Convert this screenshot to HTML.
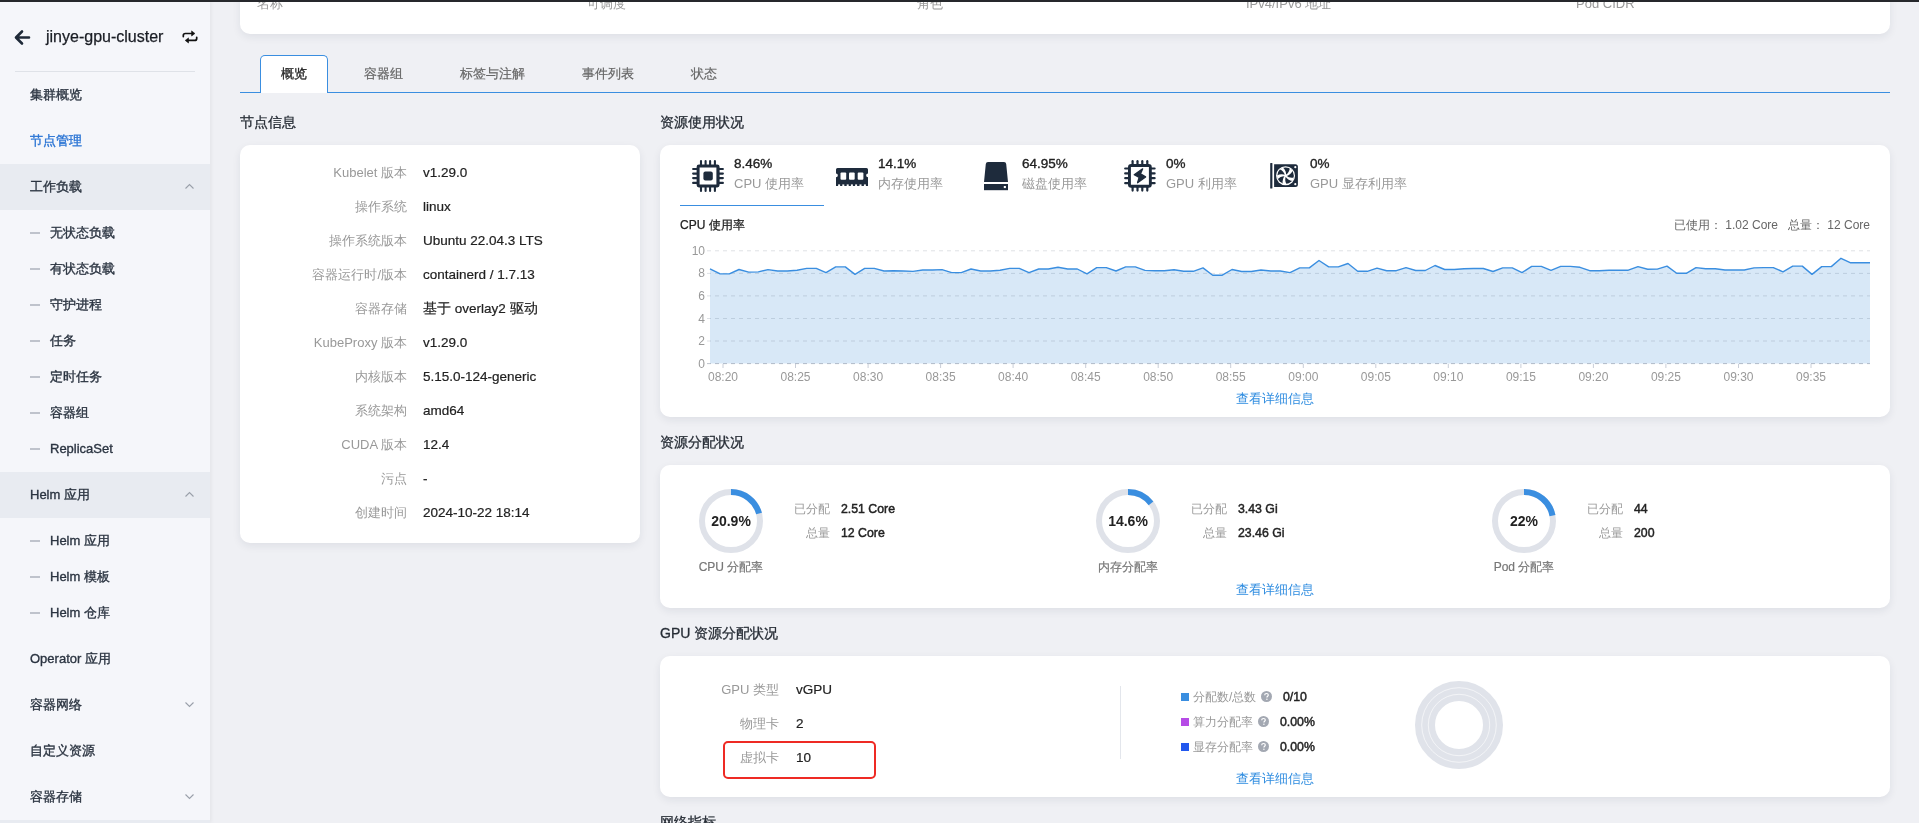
<!DOCTYPE html>
<html><head><meta charset="utf-8">
<style>
*{box-sizing:border-box;margin:0;padding:0}
html,body{width:1919px;height:823px;overflow:hidden}
body{position:relative;background:#eff0f4;font-family:"Liberation Sans",sans-serif;color:#222;font-size:13px}
.a{position:absolute;white-space:nowrap;line-height:20px}
#topbar{position:absolute;left:0;top:0;width:1919px;height:2px;background:#26282c;z-index:50}
#side{position:absolute;left:0;top:0;width:210px;height:823px;background:#f5f6fa;box-shadow:1px 0 4px rgba(0,0,0,.06);z-index:5}
#side .it{position:absolute;left:30px;font-size:13px;color:#2b3441;line-height:20px;margin-top:1px;-webkit-text-stroke:0.35px #2b3441}
#side .grp{position:absolute;left:0;width:210px;height:46px;background:#e8ebf1}
#side .sub{position:absolute;left:50px;font-size:13px;color:#2b3441;line-height:20px;margin-top:1px;-webkit-text-stroke:0.35px #2b3441}
#side .dash{position:absolute;left:30px;width:10px;height:2px;margin-top:0px;background:#bfc3cc}
.chev{position:absolute;width:9px;height:9px}
.card{position:absolute;background:#fff;border-radius:10px;box-shadow:0 3px 8px rgba(30,40,60,.08)}
.title{position:absolute;font-size:14px;color:#262c35;line-height:20px;white-space:nowrap;-webkit-text-stroke:0.3px #262c35}
.lbl{position:absolute;color:#999;font-size:13px;line-height:20px;white-space:nowrap;text-align:right}
.val{position:absolute;color:#222;font-size:13.5px;line-height:20px;white-space:nowrap;-webkit-text-stroke:0.2px #222}
</style></head>
<body>
<div id="root" style="position:absolute;left:0;top:0;width:1919px;height:823px;overflow:hidden;will-change:transform">
<div id="topbar"></div>

<!-- SIDEBAR -->
<div id="side">
  <svg style="position:absolute;left:13px;top:29px" width="18" height="17" viewBox="0 0 18 17"><path d="M16 8.5H3.5M9 2.5L3 8.5L9 14.5" fill="none" stroke="#1f2a38" stroke-width="2.6" stroke-linecap="round" stroke-linejoin="round"/></svg>
  <div class="a" style="left:46px;top:27px;font-size:16px;color:#1a1d24;-webkit-text-stroke:0.25px #1a1d24">jinye-gpu-cluster</div>
  <svg style="position:absolute;left:176px;top:24px" width="28" height="26" viewBox="0 0 28 26"><g fill="none" stroke="#111" stroke-width="1.7" stroke-linecap="round"><path d="M7.3 12.6V11.4Q7.3 9.5 9.4 9.5H16"/><path d="M20.7 13.3V14.4Q20.7 16.4 18.7 16.4H12.2"/></g><g fill="#111" stroke="#111" stroke-width="0.6" stroke-linejoin="round"><path d="M15.6 6.9L18.9 9.5L15.6 12Z"/><path d="M12.5 13.9L9.2 16.4L12.5 19Z"/></g></svg>
  <div style="position:absolute;left:15px;top:71px;width:180px;height:1px;background:#dfe2e8"></div>

  <div class="it" style="top:84px">集群概览</div>
  <div class="it" style="top:130px;color:#2a74d4;-webkit-text-stroke-color:#2a74d4">节点管理</div>

  <div class="grp" style="top:164px"></div>
  <div class="it" style="top:176px">工作负载</div>
  <svg class="chev" style="left:185px;top:182px" viewBox="0 0 9 9"><path d="M0.5 6.5L4.5 2.5L8.5 6.5" fill="none" stroke="#9aa0aa" stroke-width="1.1"/></svg>

  <div class="dash" style="top:231.5px"></div><div class="sub" style="top:222px">无状态负载</div>
  <div class="dash" style="top:267.5px"></div><div class="sub" style="top:258px">有状态负载</div>
  <div class="dash" style="top:303.5px"></div><div class="sub" style="top:294px">守护进程</div>
  <div class="dash" style="top:339.5px"></div><div class="sub" style="top:330px">任务</div>
  <div class="dash" style="top:375.5px"></div><div class="sub" style="top:366px">定时任务</div>
  <div class="dash" style="top:411.5px"></div><div class="sub" style="top:402px">容器组</div>
  <div class="dash" style="top:447.5px"></div><div class="sub" style="top:438px">ReplicaSet</div>

  <div class="grp" style="top:472px"></div>
  <div class="it" style="top:484px">Helm 应用</div>
  <svg class="chev" style="left:185px;top:490px" viewBox="0 0 9 9"><path d="M0.5 6.5L4.5 2.5L8.5 6.5" fill="none" stroke="#9aa0aa" stroke-width="1.1"/></svg>

  <div class="dash" style="top:539.5px"></div><div class="sub" style="top:530px">Helm 应用</div>
  <div class="dash" style="top:575.5px"></div><div class="sub" style="top:566px">Helm 模板</div>
  <div class="dash" style="top:611.5px"></div><div class="sub" style="top:602px">Helm 仓库</div>

  <div class="it" style="top:648px">Operator 应用</div>
  <div class="it" style="top:694px">容器网络</div>
  <svg class="chev" style="left:185px;top:700px" viewBox="0 0 9 9"><path d="M0.5 2.5L4.5 6.5L8.5 2.5" fill="none" stroke="#9aa0aa" stroke-width="1.1"/></svg>
  <div class="it" style="top:740px">自定义资源</div>
  <div class="it" style="top:786px">容器存储</div>
  <svg class="chev" style="left:185px;top:792px" viewBox="0 0 9 9"><path d="M0.5 2.5L4.5 6.5L8.5 2.5" fill="none" stroke="#9aa0aa" stroke-width="1.1"/></svg>
  <div class="grp" style="top:820px"></div>
</div>

<!-- MAIN -->
<!-- top card -->
<div class="card" style="left:240px;top:-20px;width:1650px;height:54px"></div>
<div class="lbl" style="left:257px;top:-6px;color:#999;text-align:left">名称</div>
<div class="lbl" style="left:587px;top:-6px;text-align:left">可调度</div>
<div class="lbl" style="left:917px;top:-6px;text-align:left">角色</div>
<div class="lbl" style="left:1246px;top:-6px;text-align:left">IPv4/IPv6 地址</div>
<div class="lbl" style="left:1576px;top:-6px;text-align:left">Pod CIDR</div>

<!-- tabs -->
<div style="position:absolute;left:240px;top:92px;width:1650px;height:1px;background:#3a8ee0"></div>
<div style="position:absolute;left:260px;top:55px;width:68px;height:38px;background:#fff;border:1px solid #3a8ee0;border-bottom:none;border-radius:5px 5px 0 0"></div>
<div class="a" style="left:281px;top:64px;font-size:13px;color:#222;-webkit-text-stroke:0.3px #222">概览</div>
<div class="a" style="left:364px;top:64px;font-size:13px;color:#666;-webkit-text-stroke:0.2px #666">容器组</div>
<div class="a" style="left:460px;top:64px;font-size:13px;color:#666;-webkit-text-stroke:0.2px #666">标签与注解</div>
<div class="a" style="left:582px;top:64px;font-size:13px;color:#666;-webkit-text-stroke:0.2px #666">事件列表</div>
<div class="a" style="left:691px;top:64px;font-size:13px;color:#666;-webkit-text-stroke:0.2px #666">状态</div>

<div class="title" style="left:240px;top:112px">节点信息</div>
<div class="title" style="left:660px;top:112px">资源使用状况</div>
<div class="title" style="left:660px;top:432px">资源分配状况</div>
<div class="title" style="left:660px;top:623px">GPU 资源分配状况</div>
<div class="title" style="left:660px;top:812px">网络指标</div>

<!-- node info card -->
<div class="card" style="left:240px;top:145px;width:400px;height:398px"></div>
<div class="lbl" style="right:1512px;top:163px">Kubelet 版本</div><div class="val" style="left:423px;top:163px">v1.29.0</div>
<div class="lbl" style="right:1512px;top:197px">操作系统</div><div class="val" style="left:423px;top:197px">linux</div>
<div class="lbl" style="right:1512px;top:231px">操作系统版本</div><div class="val" style="left:423px;top:231px">Ubuntu 22.04.3 LTS</div>
<div class="lbl" style="right:1512px;top:265px">容器运行时/版本</div><div class="val" style="left:423px;top:265px">containerd / 1.7.13</div>
<div class="lbl" style="right:1512px;top:299px">容器存储</div><div class="val" style="left:423px;top:299px">基于 overlay2 驱动</div>
<div class="lbl" style="right:1512px;top:333px">KubeProxy 版本</div><div class="val" style="left:423px;top:333px">v1.29.0</div>
<div class="lbl" style="right:1512px;top:367px">内核版本</div><div class="val" style="left:423px;top:367px">5.15.0-124-generic</div>
<div class="lbl" style="right:1512px;top:401px">系统架构</div><div class="val" style="left:423px;top:401px">amd64</div>
<div class="lbl" style="right:1512px;top:435px">CUDA 版本</div><div class="val" style="left:423px;top:435px">12.4</div>
<div class="lbl" style="right:1512px;top:469px">污点</div><div class="val" style="left:423px;top:469px">-</div>
<div class="lbl" style="right:1512px;top:503px">创建时间</div><div class="val" style="left:423px;top:503px">2024-10-22 18:14</div>

<!-- resource usage card -->
<div class="card" style="left:660px;top:145px;width:1230px;height:272px"></div>
<svg style="position:absolute;left:0;top:0" width="1919" height="823" viewBox="0 0 1919 823">
<path d="M710,363.6 L710.0,268.8 L719.7,273.7 L729.3,273.9 L739.0,269.5 L748.7,272.1 L758.3,271.9 L768.0,269.6 L777.7,271.0 L787.3,271.0 L797.0,270.2 L806.7,268.4 L816.3,268.4 L826.0,272.7 L835.7,266.9 L845.3,266.9 L855.0,274.4 L864.7,268.4 L874.3,268.4 L884.0,271.0 L893.7,270.8 L903.3,271.0 L913.0,271.4 L922.7,270.0 L932.3,270.0 L942.0,269.6 L951.7,272.6 L961.3,272.6 L971.0,269.0 L980.7,271.0 L990.3,271.0 L1000.0,270.2 L1009.7,268.4 L1019.3,268.4 L1029.0,272.6 L1038.7,269.0 L1048.3,269.0 L1058.0,267.2 L1067.7,269.0 L1077.3,269.0 L1087.0,273.9 L1096.7,267.6 L1106.3,267.6 L1116.0,271.0 L1125.7,266.9 L1135.3,266.9 L1145.0,270.4 L1154.7,270.7 L1164.3,270.7 L1174.0,269.7 L1183.7,271.3 L1193.3,271.3 L1203.0,267.9 L1212.7,275.2 L1222.3,275.2 L1232.0,269.5 L1241.7,271.5 L1251.3,271.5 L1261.0,270.0 L1270.7,271.0 L1280.3,271.0 L1290.0,272.6 L1299.7,267.9 L1309.3,267.9 L1319.0,260.5 L1328.7,266.9 L1338.3,266.9 L1348.0,263.5 L1357.7,271.3 L1367.3,271.3 L1377.0,268.1 L1386.7,270.7 L1396.3,270.7 L1406.0,267.6 L1415.7,270.5 L1425.3,270.5 L1435.0,265.5 L1444.7,269.5 L1454.3,269.5 L1464.0,268.7 L1473.7,268.5 L1483.3,268.5 L1493.0,271.5 L1502.7,267.9 L1512.3,267.9 L1522.0,272.6 L1531.7,266.4 L1541.3,266.4 L1551.0,270.4 L1560.7,266.4 L1570.3,266.4 L1580.0,267.3 L1589.7,270.7 L1599.3,270.7 L1609.0,270.2 L1618.7,270.2 L1628.3,270.2 L1638.0,266.6 L1647.7,269.2 L1657.3,269.1 L1667.0,266.1 L1676.7,273.3 L1686.3,273.3 L1696.0,267.6 L1705.7,268.8 L1715.3,268.8 L1725.0,270.0 L1734.7,270.0 L1744.3,270.0 L1754.0,267.9 L1763.7,267.6 L1773.3,267.6 L1783.0,271.8 L1792.7,266.1 L1802.3,266.1 L1812.0,274.4 L1821.7,266.6 L1831.3,266.6 L1841.0,258.3 L1850.7,262.8 L1860.3,262.8 L1870.0,262.8 L1870,363.6 Z" fill="#d8e8f7"/>
<line x1="707" y1="363.6" x2="1870" y2="363.6" stroke="rgba(60,75,100,0.17)" stroke-width="1" stroke-dasharray="4 4"/>
<line x1="707" y1="341.0" x2="1870" y2="341.0" stroke="rgba(60,75,100,0.17)" stroke-width="1" stroke-dasharray="4 4"/>
<line x1="707" y1="318.5" x2="1870" y2="318.5" stroke="rgba(60,75,100,0.17)" stroke-width="1" stroke-dasharray="4 4"/>
<line x1="707" y1="295.9" x2="1870" y2="295.9" stroke="rgba(60,75,100,0.17)" stroke-width="1" stroke-dasharray="4 4"/>
<line x1="707" y1="273.4" x2="1870" y2="273.4" stroke="rgba(60,75,100,0.17)" stroke-width="1" stroke-dasharray="4 4"/>
<line x1="707" y1="250.8" x2="1870" y2="250.8" stroke="rgba(60,75,100,0.17)" stroke-width="1" stroke-dasharray="4 4"/>
<polyline points="710.0,268.8 719.7,273.7 729.3,273.9 739.0,269.5 748.7,272.1 758.3,271.9 768.0,269.6 777.7,271.0 787.3,271.0 797.0,270.2 806.7,268.4 816.3,268.4 826.0,272.7 835.7,266.9 845.3,266.9 855.0,274.4 864.7,268.4 874.3,268.4 884.0,271.0 893.7,270.8 903.3,271.0 913.0,271.4 922.7,270.0 932.3,270.0 942.0,269.6 951.7,272.6 961.3,272.6 971.0,269.0 980.7,271.0 990.3,271.0 1000.0,270.2 1009.7,268.4 1019.3,268.4 1029.0,272.6 1038.7,269.0 1048.3,269.0 1058.0,267.2 1067.7,269.0 1077.3,269.0 1087.0,273.9 1096.7,267.6 1106.3,267.6 1116.0,271.0 1125.7,266.9 1135.3,266.9 1145.0,270.4 1154.7,270.7 1164.3,270.7 1174.0,269.7 1183.7,271.3 1193.3,271.3 1203.0,267.9 1212.7,275.2 1222.3,275.2 1232.0,269.5 1241.7,271.5 1251.3,271.5 1261.0,270.0 1270.7,271.0 1280.3,271.0 1290.0,272.6 1299.7,267.9 1309.3,267.9 1319.0,260.5 1328.7,266.9 1338.3,266.9 1348.0,263.5 1357.7,271.3 1367.3,271.3 1377.0,268.1 1386.7,270.7 1396.3,270.7 1406.0,267.6 1415.7,270.5 1425.3,270.5 1435.0,265.5 1444.7,269.5 1454.3,269.5 1464.0,268.7 1473.7,268.5 1483.3,268.5 1493.0,271.5 1502.7,267.9 1512.3,267.9 1522.0,272.6 1531.7,266.4 1541.3,266.4 1551.0,270.4 1560.7,266.4 1570.3,266.4 1580.0,267.3 1589.7,270.7 1599.3,270.7 1609.0,270.2 1618.7,270.2 1628.3,270.2 1638.0,266.6 1647.7,269.2 1657.3,269.1 1667.0,266.1 1676.7,273.3 1686.3,273.3 1696.0,267.6 1705.7,268.8 1715.3,268.8 1725.0,270.0 1734.7,270.0 1744.3,270.0 1754.0,267.9 1763.7,267.6 1773.3,267.6 1783.0,271.8 1792.7,266.1 1802.3,266.1 1812.0,274.4 1821.7,266.6 1831.3,266.6 1841.0,258.3 1850.7,262.8 1860.3,262.8 1870.0,262.8" fill="none" stroke="#3a8ee0" stroke-width="1.4" stroke-linejoin="round"/>
<line x1="707" y1="363.6" x2="1870" y2="363.6" stroke="rgba(60,75,100,0.2)" stroke-width="1" stroke-dasharray="4 4"/>
<text x="705" y="367.6" text-anchor="end" font-size="12" fill="#999">0</text>
<text x="705" y="345.0" text-anchor="end" font-size="12" fill="#999">2</text>
<text x="705" y="322.5" text-anchor="end" font-size="12" fill="#999">4</text>
<text x="705" y="299.9" text-anchor="end" font-size="12" fill="#999">6</text>
<text x="705" y="277.4" text-anchor="end" font-size="12" fill="#999">8</text>
<text x="705" y="254.8" text-anchor="end" font-size="12" fill="#999">10</text>
<line x1="723.0" y1="364" x2="723.0" y2="368" stroke="#c9ced8" stroke-width="1"/>
<text x="723.0" y="381" text-anchor="middle" font-size="12" fill="#999">08:20</text>
<line x1="795.5" y1="364" x2="795.5" y2="368" stroke="#c9ced8" stroke-width="1"/>
<text x="795.5" y="381" text-anchor="middle" font-size="12" fill="#999">08:25</text>
<line x1="868.1" y1="364" x2="868.1" y2="368" stroke="#c9ced8" stroke-width="1"/>
<text x="868.1" y="381" text-anchor="middle" font-size="12" fill="#999">08:30</text>
<line x1="940.6" y1="364" x2="940.6" y2="368" stroke="#c9ced8" stroke-width="1"/>
<text x="940.6" y="381" text-anchor="middle" font-size="12" fill="#999">08:35</text>
<line x1="1013.1" y1="364" x2="1013.1" y2="368" stroke="#c9ced8" stroke-width="1"/>
<text x="1013.1" y="381" text-anchor="middle" font-size="12" fill="#999">08:40</text>
<line x1="1085.7" y1="364" x2="1085.7" y2="368" stroke="#c9ced8" stroke-width="1"/>
<text x="1085.7" y="381" text-anchor="middle" font-size="12" fill="#999">08:45</text>
<line x1="1158.2" y1="364" x2="1158.2" y2="368" stroke="#c9ced8" stroke-width="1"/>
<text x="1158.2" y="381" text-anchor="middle" font-size="12" fill="#999">08:50</text>
<line x1="1230.7" y1="364" x2="1230.7" y2="368" stroke="#c9ced8" stroke-width="1"/>
<text x="1230.7" y="381" text-anchor="middle" font-size="12" fill="#999">08:55</text>
<line x1="1303.3" y1="364" x2="1303.3" y2="368" stroke="#c9ced8" stroke-width="1"/>
<text x="1303.3" y="381" text-anchor="middle" font-size="12" fill="#999">09:00</text>
<line x1="1375.8" y1="364" x2="1375.8" y2="368" stroke="#c9ced8" stroke-width="1"/>
<text x="1375.8" y="381" text-anchor="middle" font-size="12" fill="#999">09:05</text>
<line x1="1448.3" y1="364" x2="1448.3" y2="368" stroke="#c9ced8" stroke-width="1"/>
<text x="1448.3" y="381" text-anchor="middle" font-size="12" fill="#999">09:10</text>
<line x1="1520.9" y1="364" x2="1520.9" y2="368" stroke="#c9ced8" stroke-width="1"/>
<text x="1520.9" y="381" text-anchor="middle" font-size="12" fill="#999">09:15</text>
<line x1="1593.4" y1="364" x2="1593.4" y2="368" stroke="#c9ced8" stroke-width="1"/>
<text x="1593.4" y="381" text-anchor="middle" font-size="12" fill="#999">09:20</text>
<line x1="1665.9" y1="364" x2="1665.9" y2="368" stroke="#c9ced8" stroke-width="1"/>
<text x="1665.9" y="381" text-anchor="middle" font-size="12" fill="#999">09:25</text>
<line x1="1738.5" y1="364" x2="1738.5" y2="368" stroke="#c9ced8" stroke-width="1"/>
<text x="1738.5" y="381" text-anchor="middle" font-size="12" fill="#999">09:30</text>
<line x1="1811.0" y1="364" x2="1811.0" y2="368" stroke="#c9ced8" stroke-width="1"/>
<text x="1811.0" y="381" text-anchor="middle" font-size="12" fill="#999">09:35</text>
</svg>
<!-- usage tabs -->
<svg style="position:absolute;left:692px;top:160px" width="32" height="32" viewBox="0 0 32 32" fill="#1e2b3c">
<path fill-rule="evenodd" d="M7 4.5H25.2Q27.6 4.5 27.6 6.9V25.1Q27.6 27.5 25.2 27.5H7Q4.6 27.5 4.6 25.1V6.9Q4.6 4.5 7 4.5ZM7.6 7.6V24.4H24.4V7.6Z"/>
<rect x="11.4" y="11.6" width="9.4" height="8.8" rx="2"/>
<g stroke="#1e2b3c" stroke-width="2.1" stroke-linecap="round"><line x1="9.0" y1="1.1" x2="9.0" y2="5" /><line x1="9.0" y1="27" x2="9.0" y2="30.9" /><line x1="1.1" y1="9.0" x2="5" y2="9.0" /><line x1="27" y1="9.0" x2="30.9" y2="9.0" /><line x1="13.6" y1="1.1" x2="13.6" y2="5" /><line x1="13.6" y1="27" x2="13.6" y2="30.9" /><line x1="1.1" y1="13.6" x2="5" y2="13.6" /><line x1="27" y1="13.6" x2="30.9" y2="13.6" /><line x1="18.1" y1="1.1" x2="18.1" y2="5" /><line x1="18.1" y1="27" x2="18.1" y2="30.9" /><line x1="1.1" y1="18.1" x2="5" y2="18.1" /><line x1="27" y1="18.1" x2="30.9" y2="18.1" /><line x1="22.9" y1="1.1" x2="22.9" y2="5" /><line x1="22.9" y1="27" x2="22.9" y2="30.9" /><line x1="1.1" y1="22.9" x2="5" y2="22.9" /><line x1="27" y1="22.9" x2="30.9" y2="22.9" /></g>
</svg>
<div class="a" style="left:734px;top:154px;font-size:13.5px;color:#222;-webkit-text-stroke:0.35px #222">8.46%</div>
<div class="a" style="left:734px;top:174px;font-size:13px;color:#999">CPU 使用率</div>
<div style="position:absolute;left:680px;top:204.5px;width:144px;height:1.5px;background:#3a8ee0"></div>

<svg style="position:absolute;left:836px;top:167px" width="32" height="20" viewBox="0 0 32 20" fill="#1e2b3c">
<path d="M1.5 1H30.5Q32 1 32 2.5V6.5A1.8 1.8 0 0 0 32 10.2V19H0V10.2A1.8 1.8 0 0 0 0 6.5V2.5Q0 1 1.5 1Z"/>
<rect x="4.5" y="5.6" width="5.7" height="7.1" rx="1" fill="#fff"/><rect x="13" y="5.6" width="5.7" height="7.1" rx="1" fill="#fff"/><rect x="21.7" y="5.6" width="5.7" height="7.1" rx="1" fill="#fff"/>
<g fill="#fff"><rect x="2.1" y="17.4" width="2" height="2"/><rect x="6.3" y="17.4" width="2" height="2"/><rect x="10.7" y="17.4" width="2" height="2"/><rect x="14.9" y="17.4" width="2" height="2"/><rect x="19.1" y="17.4" width="2" height="2"/><rect x="23.5" y="17.4" width="2" height="2"/><rect x="27.9" y="17.4" width="2" height="2"/></g>
</svg>
<div class="a" style="left:878px;top:154px;font-size:13.5px;color:#222;-webkit-text-stroke:0.35px #222">14.1%</div>
<div class="a" style="left:878px;top:174px;font-size:13px;color:#999">内存使用率</div>

<svg style="position:absolute;left:984px;top:161px" width="24" height="30" viewBox="0 0 24 30" fill="#1e2b3c">
<path d="M4 1H20Q22 1 22.2 3L24 21H0L1.8 3Q2 1 4 1Z"/>
<rect x="0" y="23" width="24" height="6.2"/>
<rect x="19.8" y="25" width="2.1" height="2.1" fill="#fff"/>
</svg>
<div class="a" style="left:1022px;top:154px;font-size:13.5px;color:#222;-webkit-text-stroke:0.35px #222">64.95%</div>
<div class="a" style="left:1022px;top:174px;font-size:13px;color:#999">磁盘使用率</div>

<svg style="position:absolute;left:1124px;top:160px" width="32" height="32" viewBox="0 0 32 32" fill="#1e2b3c">
<path fill-rule="evenodd" d="M7.2 4H24.6Q27.8 4 27.8 7.2V24.5Q27.8 27.7 24.6 27.7H7.2Q4 27.7 4 24.5V7.2Q4 4 7.2 4ZM6.9 6.9H24.9V24.8H6.9Z"/>
<g stroke="#1e2b3c" stroke-width="2.2" stroke-linecap="round"><line x1="8.6" y1="1.2" x2="8.6" y2="4.5" /><line x1="8.6" y1="27.3" x2="8.6" y2="30.6" /><line x1="1.2" y1="8.5" x2="4.5" y2="8.5" /><line x1="27.3" y1="8.5" x2="30.6" y2="8.5" /><line x1="13.5" y1="1.2" x2="13.5" y2="4.5" /><line x1="13.5" y1="27.3" x2="13.5" y2="30.6" /><line x1="1.2" y1="13.4" x2="4.5" y2="13.4" /><line x1="27.3" y1="13.4" x2="30.6" y2="13.4" /><line x1="18.3" y1="1.2" x2="18.3" y2="4.5" /><line x1="18.3" y1="27.3" x2="18.3" y2="30.6" /><line x1="1.2" y1="18.2" x2="4.5" y2="18.2" /><line x1="27.3" y1="18.2" x2="30.6" y2="18.2" /><line x1="23.3" y1="1.2" x2="23.3" y2="4.5" /><line x1="23.3" y1="27.3" x2="23.3" y2="30.6" /><line x1="1.2" y1="23.2" x2="4.5" y2="23.2" /><line x1="27.3" y1="23.2" x2="30.6" y2="23.2" /></g>
<path d="M18.6 8.9L10.2 14.7L15.2 17.3L13.6 22.8L21.6 16.9L16.5 13.8Z" stroke="#1e2b3c" stroke-width="1.3" stroke-linejoin="round"/>
</svg>
<div class="a" style="left:1166px;top:154px;font-size:13.5px;color:#222;-webkit-text-stroke:0.35px #222">0%</div>
<div class="a" style="left:1166px;top:174px;font-size:13px;color:#999">GPU 利用率</div>

<svg style="position:absolute;left:1268px;top:162px" width="32" height="28" viewBox="0 0 32 28" fill="#1e2b3c">
<rect x="2.2" y="1" width="2.2" height="25.6" rx="0.6"/>
<path d="M6.1 2.3H27.4Q29.9 2.3 29.9 4.8V22.6Q29.9 25.1 27.4 25.1H6.1Z"/>
<circle cx="17.55" cy="13.7" r="9.5" fill="#fff"/>
<circle cx="17.55" cy="13.7" r="8.3"/>
<g transform="translate(17.55 13.7)" fill="#fff"><path d="M0.6 -0.2Q0.9 -5 -2.6 -8.3L-5.9 -6.4Q-1.6 -4.6 -0.6 -0.2Z" transform="rotate(0)"/><path d="M0.6 -0.2Q0.9 -5 -2.6 -8.3L-5.9 -6.4Q-1.6 -4.6 -0.6 -0.2Z" transform="rotate(72)"/><path d="M0.6 -0.2Q0.9 -5 -2.6 -8.3L-5.9 -6.4Q-1.6 -4.6 -0.6 -0.2Z" transform="rotate(144)"/><path d="M0.6 -0.2Q0.9 -5 -2.6 -8.3L-5.9 -6.4Q-1.6 -4.6 -0.6 -0.2Z" transform="rotate(216)"/><path d="M0.6 -0.2Q0.9 -5 -2.6 -8.3L-5.9 -6.4Q-1.6 -4.6 -0.6 -0.2Z" transform="rotate(288)"/></g>
<circle cx="17.55" cy="13.7" r="1.2" fill="#fff"/>
<circle cx="27.3" cy="5.2" r="1.1" fill="#fff"/><circle cx="27.3" cy="22.2" r="1.1" fill="#fff"/>
</svg>
<div class="a" style="left:1310px;top:154px;font-size:13.5px;color:#222;-webkit-text-stroke:0.35px #222">0%</div>
<div class="a" style="left:1310px;top:174px;font-size:13px;color:#999">GPU 显存利用率</div>

<div class="a" style="left:680px;top:215px;font-size:12px;color:#222;-webkit-text-stroke:0.25px #222">CPU 使用率</div>
<div class="a" style="right:49px;top:215px;font-size:12px;color:#666">已使用：&nbsp;1.02 Core&nbsp;&nbsp;&nbsp;总量：&nbsp;12 Core</div>
<div class="a" style="left:1236px;top:389px;font-size:13px;color:#2e8ce0">查看详细信息</div>


<!-- allocation card -->
<div class="card" style="left:660px;top:465px;width:1230px;height:143px"></div>
<svg style="position:absolute;left:696px;top:486px" width="70" height="70" viewBox="696 486 70 70">
<circle cx="731" cy="521" r="29" fill="none" stroke="#dfe2e9" stroke-width="6"/>
<path d="M731 492 A29 29 0 0 1 759.04 513.61" fill="none" stroke="#3a8ee0" stroke-width="6"/>
</svg>
<div class="a" style="left:691px;width:80px;text-align:center;top:511px;font-size:14px;font-weight:700;color:#222">20.9%</div>
<div class="a" style="left:681px;width:100px;text-align:center;top:557px;font-size:12px;color:#777;-webkit-text-stroke:0.2px #777">CPU 分配率</div>
<div class="lbl" style="right:1089px;top:499px;font-size:12px">已分配</div>
<div class="val" style="left:841px;top:499px;font-size:12.3px;-webkit-text-stroke:0.45px #222">2.51 Core</div>
<div class="lbl" style="right:1089px;top:523px;font-size:12px">总量</div>
<div class="val" style="left:841px;top:523px;font-size:12.3px;-webkit-text-stroke:0.45px #222">12 Core</div>

<svg style="position:absolute;left:1093px;top:486px" width="70" height="70" viewBox="1093 486 70 70">
<circle cx="1128" cy="521" r="29" fill="none" stroke="#dfe2e9" stroke-width="6"/>
<path d="M1128 492 A29 29 0 0 1 1151.03 503.37" fill="none" stroke="#3a8ee0" stroke-width="6"/>
</svg>
<div class="a" style="left:1088px;width:80px;text-align:center;top:511px;font-size:14px;font-weight:700;color:#222">14.6%</div>
<div class="a" style="left:1078px;width:100px;text-align:center;top:557px;font-size:12px;color:#777;-webkit-text-stroke:0.2px #777">内存分配率</div>
<div class="lbl" style="right:692px;top:499px;font-size:12px">已分配</div>
<div class="val" style="left:1238px;top:499px;font-size:12.3px;-webkit-text-stroke:0.45px #222">3.43 Gi</div>
<div class="lbl" style="right:692px;top:523px;font-size:12px">总量</div>
<div class="val" style="left:1238px;top:523px;font-size:12.3px;-webkit-text-stroke:0.45px #222">23.46 Gi</div>

<svg style="position:absolute;left:1489px;top:486px" width="70" height="70" viewBox="1489 486 70 70">
<circle cx="1524" cy="521" r="29" fill="none" stroke="#dfe2e9" stroke-width="6"/>
<path d="M1524 492 A29 29 0 0 1 1552.49 515.57" fill="none" stroke="#3a8ee0" stroke-width="6"/>
</svg>
<div class="a" style="left:1484px;width:80px;text-align:center;top:511px;font-size:14px;font-weight:700;color:#222">22%</div>
<div class="a" style="left:1474px;width:100px;text-align:center;top:557px;font-size:12px;color:#777;-webkit-text-stroke:0.2px #777">Pod 分配率</div>
<div class="lbl" style="right:296px;top:499px;font-size:12px">已分配</div>
<div class="val" style="left:1634px;top:499px;font-size:12.3px;-webkit-text-stroke:0.45px #222">44</div>
<div class="lbl" style="right:296px;top:523px;font-size:12px">总量</div>
<div class="val" style="left:1634px;top:523px;font-size:12.3px;-webkit-text-stroke:0.45px #222">200</div>

<div class="a" style="left:1236px;top:580px;font-size:13px;color:#2e8ce0">查看详细信息</div>

<!-- GPU card -->
<div class="card" style="left:660px;top:656px;width:1230px;height:141px"></div>
<div class="lbl" style="right:1140px;top:680px">GPU 类型</div><div class="val" style="left:796px;top:680px">vGPU</div>
<div class="lbl" style="right:1140px;top:714px">物理卡</div><div class="val" style="left:796px;top:714px">2</div>
<div class="lbl" style="right:1140px;top:748px">虚拟卡</div><div class="val" style="left:796px;top:748px">10</div>
<div style="position:absolute;left:723px;top:741px;width:153px;height:38px;border:2.2px solid #ee2a24;border-radius:5px"></div>
<div style="position:absolute;left:1120px;top:686px;width:1px;height:73px;background:#e3e6ec"></div>
<div style="position:absolute;left:1181px;top:693px;width:8px;height:8px;background:#3a8ee0"></div>
<div style="position:absolute;left:1181px;top:718px;width:8px;height:8px;background:#b64be6"></div>
<div style="position:absolute;left:1181px;top:743px;width:8px;height:8px;background:#2258ee"></div>
<div class="lbl" style="left:1193px;top:687px;font-size:12px;text-align:left">分配数/总数</div>
<div class="lbl" style="left:1193px;top:712px;font-size:12px;text-align:left">算力分配率</div>
<div class="lbl" style="left:1193px;top:737px;font-size:12px;text-align:left">显存分配率</div>
<svg style="position:absolute;left:1261px;top:691px" width="11" height="11" viewBox="0 0 11 11"><circle cx="5.5" cy="5.5" r="5.5" fill="#a3a8b2"/><path d="M3.7 4.2C3.7 3.1 4.5 2.5 5.5 2.5C6.5 2.5 7.3 3.1 7.3 4.1C7.3 5.2 5.9 5.3 5.9 6.5" fill="none" stroke="#fff" stroke-width="1.2"/><circle cx="5.9" cy="8.3" r="0.7" fill="#fff"/></svg>
<svg style="position:absolute;left:1258px;top:716px" width="11" height="11" viewBox="0 0 11 11"><circle cx="5.5" cy="5.5" r="5.5" fill="#a3a8b2"/><path d="M3.7 4.2C3.7 3.1 4.5 2.5 5.5 2.5C6.5 2.5 7.3 3.1 7.3 4.1C7.3 5.2 5.9 5.3 5.9 6.5" fill="none" stroke="#fff" stroke-width="1.2"/><circle cx="5.9" cy="8.3" r="0.7" fill="#fff"/></svg>
<svg style="position:absolute;left:1258px;top:741px" width="11" height="11" viewBox="0 0 11 11"><circle cx="5.5" cy="5.5" r="5.5" fill="#a3a8b2"/><path d="M3.7 4.2C3.7 3.1 4.5 2.5 5.5 2.5C6.5 2.5 7.3 3.1 7.3 4.1C7.3 5.2 5.9 5.3 5.9 6.5" fill="none" stroke="#fff" stroke-width="1.2"/><circle cx="5.9" cy="8.3" r="0.7" fill="#fff"/></svg>
<div class="val" style="left:1283px;top:687px;font-size:12.3px;-webkit-text-stroke:0.45px #222">0/10</div>
<div class="val" style="left:1280px;top:712px;font-size:12.3px;-webkit-text-stroke:0.45px #222">0.00%</div>
<div class="val" style="left:1280px;top:737px;font-size:12.3px;-webkit-text-stroke:0.45px #222">0.00%</div>
<svg style="position:absolute;left:1414px;top:680px" width="90" height="90" viewBox="0 0 90 90">
<circle cx="45" cy="45" r="34" fill="none" stroke="#e0e3ea" stroke-width="20"/>
<circle cx="45" cy="45" r="37.3" fill="none" stroke="#fff" stroke-width="0.6"/>
<circle cx="45" cy="45" r="30.7" fill="none" stroke="#fff" stroke-width="0.6"/>
</svg>
<div class="a" style="left:1236px;top:769px;font-size:13px;color:#2e8ce0">查看详细信息</div>


</div>
</body></html>
